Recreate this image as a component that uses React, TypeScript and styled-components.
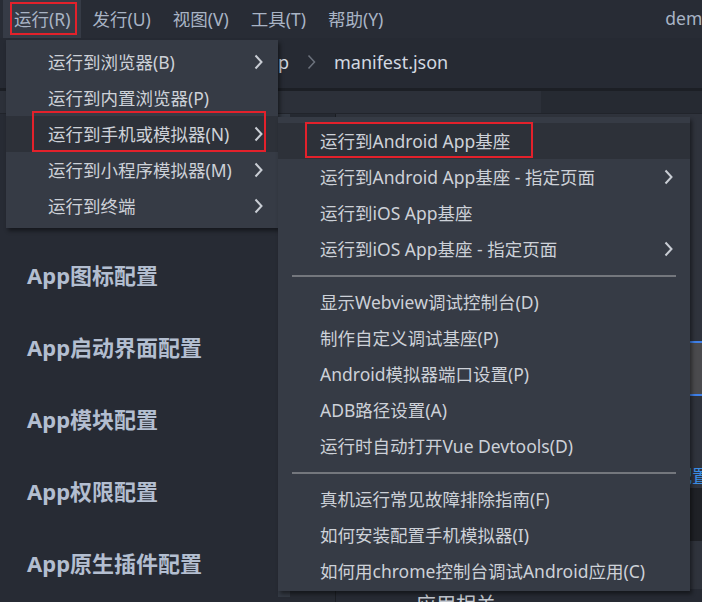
import React from "react";
import styled, { createGlobalStyle } from "styled-components";

const Global = createGlobalStyle`
  html, body { margin: 0; padding: 0; background: #262a33; }
  body { width: 702px; height: 602px; overflow: hidden; font-family: "Noto Sans", "Noto Sans CJK SC", sans-serif; }
  * { box-sizing: border-box; }
`;

const Page = styled.div`
  position: relative;
  width: 702px;
  height: 602px;
  overflow: hidden;
  background: #262a33;
  display: flex;
  flex-direction: column;
`;

const MenuBar = styled.div`
  height: 38px;
  display: flex;
  align-items: stretch;
  padding-left: 3px;
  background: #282c35;
  white-space: nowrap;
  overflow: hidden;
  flex-shrink: 0;
`;

const BarItem = styled.div<{ $active?: boolean }>`
  position: relative;
  display: flex;
  align-items: center;
  padding: 0 11px 2px;
  font-size: 17.5px;
  color: #a9b4c5;
  background: ${(p) => (p.$active ? "#363b46" : "transparent")};
`;

const Title = styled.div`
  display: flex;
  align-items: center;
  margin-left: 271px;
  padding-bottom: 2px;
  font-size: 17.5px;
  color: #a9b4c5;
`;

const Crumbs = styled.div`
  height: 53px;
  display: flex;
  align-items: center;
  gap: 18px;
  padding-left: 202px;
  padding-bottom: 2px;
  background: #262a33;
  border-bottom: 3px solid #1c1f25;
  flex-shrink: 0;
`;

const Crumb = styled.span`
  font-size: 18px;
  color: #d2d8e1;
`;

const Band = styled.div`
  height: 23px;
  display: flex;
  flex-shrink: 0;
  border-bottom: 1px solid #21242b;
`;

const BandTab = styled.div`
  width: 541px;
  background: #2c3039;
`;

const BandRest = styled.div`
  flex: 1;
  background: #262a32;
`;

const Body = styled.div`
  flex: 1;
  display: grid;
  grid-template-columns: 278px 12px 46px 1fr;
  min-height: 0;
`;

const Sidebar = styled.div`
  background: #272b34;
  padding: 52px 0 0 27px;
  display: flex;
  flex-direction: column;
  overflow: hidden;
`;

const SideLabel = styled.div`
  flex-shrink: 0;
  height: 72px;
  display: flex;
  align-items: center;
  font-size: 22px;
  font-weight: 700;
  color: #b3bed0;
  font-family: "Noto Sans", "Noto Sans CJK SC", sans-serif;
`;

const Strip = styled.div`
  background: #343a44;
  border-bottom: 5px solid #272b34;
`;

const Gutter = styled.div`
  background: #262a32;
  border-right: 1px solid #1b1e23;
`;

const Main = styled.div`
  background: #2f333c;
  display: flex;
  flex-direction: column;
  overflow: hidden;
  padding-top: 227px;
  & > * { flex-shrink: 0; }
`;

const Field = styled.div`
  height: 55px;
  background: #4a4a4d;
  border-top: 2px solid #3f80e8;
  border-bottom: 2px solid #3f80e8;
  margin-left: 300px;
`;

const LinkRow = styled.div`
  margin-top: 68px;
  height: 24px;
  display: flex;
  justify-content: flex-end;
  margin-right: -8px;
  font-size: 18px;
  line-height: 24px;
  color: #3a8ee8;
`;

const DarkBlock = styled.div`
  height: 53px;
  background: #1f2126;
`;

const Heading = styled.div`
  margin-top: 48px;
  padding-left: 80px;
  font-size: 20px;
  color: #c3c8d0;
  background: #262a33;
  height: 40px;
`;

const Menu = styled.div<{ $left: number; $top: number; $width: number }>`
  position: absolute;
  left: ${(p) => p.$left}px;
  top: ${(p) => p.$top}px;
  width: ${(p) => p.$width}px;
  background: #363b45;
  padding: 4px 0 4px;
  box-shadow: 2px 3px 4px rgba(0, 0, 0, 0.45);
  display: flex;
  flex-direction: column;
`;

const Item = styled.div<{ $hover?: boolean; $padR: number }>`
  position: relative;
  height: 36px;
  display: flex;
  align-items: center;
  justify-content: space-between;
  padding: 0 ${(p) => p.$padR}px 1px 42px;
  font-size: 17.5px;
  color: #cdd1d8;
  white-space: nowrap;
  background: ${(p) => (p.$hover ? "#2d3139" : "transparent")};
`;

const Sep = styled.div`
  height: 17px;
  display: flex;
  align-items: center;
  padding: 0 14px;
  &::after {
    content: "";
    flex: 1;
    height: 2px;
    background: #74777d;
  }
`;

const Mark = styled.div<{ $l: number; $t: number; $w: number; $h: number }>`
  position: absolute;
  left: ${(p) => p.$l}px;
  top: ${(p) => p.$t}px;
  width: ${(p) => p.$w}px;
  height: ${(p) => p.$h}px;
  border: 2px solid #e3212b;
  pointer-events: none;
`;

const Chevron = ({ color = "#c9cdd4", w = 2 }: { color?: string; w?: number }) => (
  <svg width="9" height="16" viewBox="0 0 9 16" style={{ display: "block" }}>
    <polyline points="1.5,1.5 7.5,8 1.5,14.5" fill="none" stroke={color} strokeWidth={w} />
  </svg>
);

const mainItems: { label: string; sub?: boolean; hover?: boolean }[] = [
  { label: "运行到浏览器(B)", sub: true },
  { label: "运行到内置浏览器(P)" },
  { label: "运行到手机或模拟器(N)", sub: true, hover: true },
  { label: "运行到小程序模拟器(M)", sub: true },
  { label: "运行到终端", sub: true },
];

type SubEntry = { label?: string; sub?: boolean; hover?: boolean; sep?: boolean };
const subItems: SubEntry[] = [
  { label: "运行到Android App基座", hover: true },
  { label: "运行到Android App基座 - 指定页面", sub: true },
  { label: "运行到iOS App基座" },
  { label: "运行到iOS App基座 - 指定页面", sub: true },
  { sep: true },
  { label: "显示Webview调试控制台(D)" },
  { label: "制作自定义调试基座(P)" },
  { label: "Android模拟器端口设置(P)" },
  { label: "ADB路径设置(A)" },
  { label: "运行时自动打开Vue Devtools(D)" },
  { sep: true },
  { label: "真机运行常见故障排除指南(F)" },
  { label: "如何安装配置手机模拟器(I)" },
  { label: "如何用chrome控制台调试Android应用(C)" },
];

export default function App() {
  return (
    <>
      <Global />
      <Page>
        <MenuBar>
          <BarItem $active>
            运行(R)
            <Mark $l={7} $t={2} $w={67} $h={33} />
          </BarItem>
          <BarItem>发行(U)</BarItem>
          <BarItem>视图(V)</BarItem>
          <BarItem>工具(T)</BarItem>
          <BarItem>帮助(Y)</BarItem>
          <Title>demo - manifest.json - HBuilder X</Title>
        </MenuBar>
        <Crumbs>
          <Crumb>demo-app</Crumb>
          <Chevron color="#6c727d" w={1.5} />
          <Crumb>manifest.json</Crumb>
        </Crumbs>
        <Band>
          <BandTab />
          <BandRest />
        </Band>
        <Body>
          <Sidebar>
            <SideLabel>基础配置</SideLabel>
            <SideLabel>App图标配置</SideLabel>
            <SideLabel>App启动界面配置</SideLabel>
            <SideLabel>App模块配置</SideLabel>
            <SideLabel>App权限配置</SideLabel>
            <SideLabel>App原生插件配置</SideLabel>
          </Sidebar>
          <Strip />
          <Gutter />
          <Main>
            <Field />
            <LinkRow>配置</LinkRow>
            <DarkBlock />
            <Heading>应用相关</Heading>
          </Main>
        </Body>

        <Menu $left={6} $top={40} $width={272}>
          {mainItems.map((it) => (
            <Item key={it.label} $hover={it.hover} $padR={15}>
              <span>{it.label}</span>
              {it.sub && <Chevron />}
              {it.hover && <Mark $l={26} $t={-5} $w={234} $h={41} />}
            </Item>
          ))}
        </Menu>

        <Menu $left={278} $top={117} $width={412} style={{ padding: "6px 0 2px" }}>
          {subItems.map((it, i) =>
            it.sep ? (
              <Sep key={"s" + i} />
            ) : (
              <Item key={it.label} $hover={it.hover} $padR={17}>
                <span>{it.label}</span>
                {it.sub && <Chevron />}
                {it.hover && <Mark $l={27} $t={-1} $w={228} $h={36} />}
              </Item>
            )
          )}
        </Menu>
      </Page>
    </>
  );
}
